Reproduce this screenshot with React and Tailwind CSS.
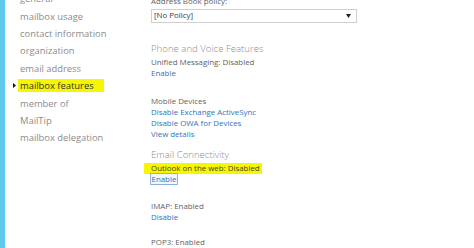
import React from "react";

const navItems = [
  "general",
  "mailbox usage",
  "contact information",
  "organization",
  "email address",
  "mailbox features",
  "member of",
  "MailTip",
  "mailbox delegation",
];

function Link({ children, focus }) {
  return (
    <div className="h-[11px] leading-[11px]">
      <span
        className={
          "text-[#2f74b8] " +
          (focus ? "outline outline-1 outline-[#8fb0dc] bg-[#f3f7fc] px-[0.5px]" : "")
        }
      >
        {children}
      </span>
    </div>
  );
}

function Label({ children }) {
  return <div className="h-[11px] leading-[11px] text-[#5f5f5f]">{children}</div>;
}

function Heading({ children, className = "" }) {
  return (
    <div className={"h-[14px] leading-[14px] text-[9.6px] text-[#8e8e8e] font-light " + className}>
      {children}
    </div>
  );
}

export default function App() {
  return (
    <div
      className="w-[474px] h-[248px] overflow-hidden bg-white flex"
      style={{ fontFamily: '"Open Sans", "Noto Sans", sans-serif' }}
    >
      <div className="w-[5px] h-full bg-[#5fc8ef] shrink-0" />
      <div className="w-[146px] shrink-0 flex flex-col -mt-[9.8px] pl-[6px]">
        {navItems.map((item) => {
          const active = item === "mailbox features";
          return (
            <div key={item} className="h-[17.4px] leading-[17.4px] flex items-center text-[9.4px]">
              <span className="w-[7px] flex justify-center">
                {active && (
                  <svg width="3" height="5" viewBox="0 0 3 5">
                    <path d="M0 0 L3 2.5 L0 5 Z" fill="#111" />
                  </svg>
                )}
              </span>
              <span
                className={
                  active
                    ? "bg-[#f6f600] text-[#333] h-[13px] leading-[13px] pl-[2px] pr-[10px]"
                    : "text-[#8c8c8c] pl-[2px]"
                }
              >
                {item}
              </span>
            </div>
          );
        })}
      </div>
      <div className="flex flex-col text-[7.9px] -mt-[4.5px]">
        <Label>Address Book policy:</Label>
        <div className="mt-[2px] w-[206px] h-[14.5px] border border-[#cfcfcf] flex items-center justify-between pl-[2px] pr-[5px] text-[#3a3a3a]">
          <span>[No Policy]</span>
          <svg width="5" height="4" viewBox="0 0 5 4">
            <path d="M0 0 L5 0 L2.5 4 Z" fill="#222" />
          </svg>
        </div>
        <Heading className="mt-[18.5px]">Phone and Voice Features</Heading>
        <div className="mt-[1.7px]">
          <Label>Unified Messaging: Disabled</Label>
          <Link>Enable</Link>
        </div>
        <div className="mt-[16.7px]">
          <Label>Mobile Devices</Label>
          <Link>Disable Exchange ActiveSync</Link>
          <Link>Disable OWA for Devices</Link>
          <Link>View details</Link>
        </div>
        <Heading className="mt-[8px]">Email Connectivity</Heading>
        <div className="mt-[1.5px]">
          <div className="h-[11px] leading-[11px] -ml-[7px]">
            <span className="bg-[#f6f600] text-[#45451c] pl-[7px] pr-[2px] inline-block h-[11px]">
              Outlook on the web: Disabled
            </span>
          </div>
          <Link focus>Enable</Link>
        </div>
        <div className="mt-[16px]">
          <Label>IMAP: Enabled</Label>
          <Link>Disable</Link>
        </div>
        <div className="mt-[13.5px]">
          <Label>POP3: Enabled</Label>
        </div>
      </div>
    </div>
  );
}
